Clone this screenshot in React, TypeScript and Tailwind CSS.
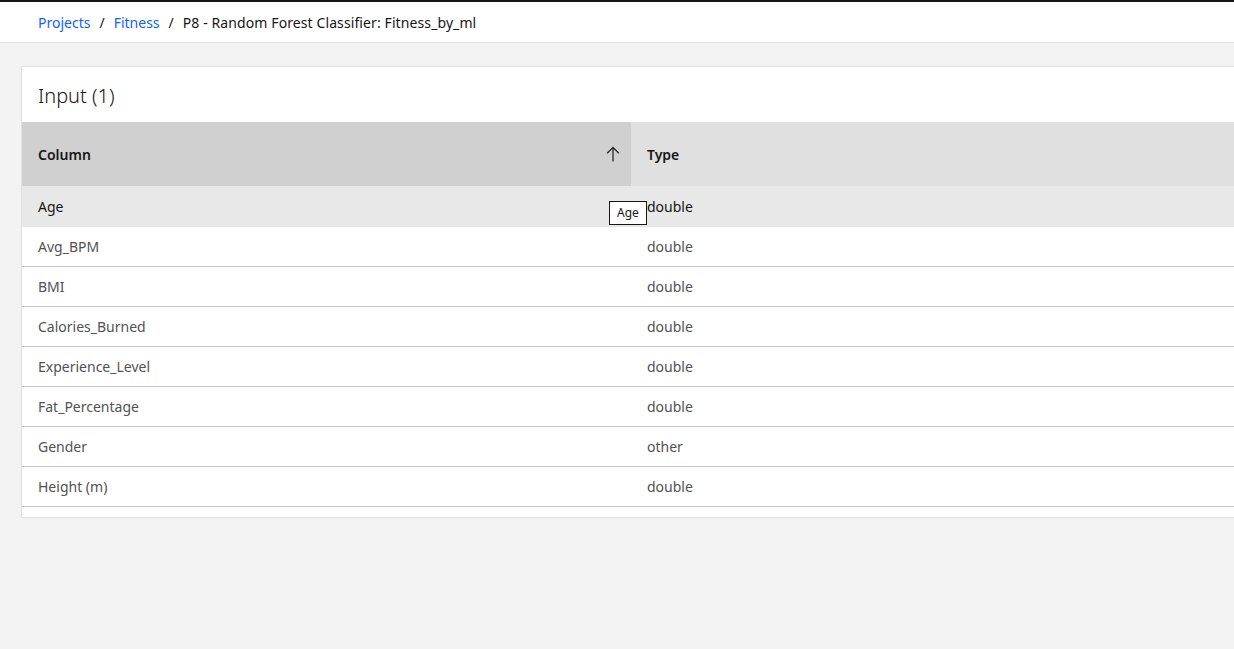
const rows: { name: string; type: string }[] = [
  { name: "Age", type: "double" },
  { name: "Avg_BPM", type: "double" },
  { name: "BMI", type: "double" },
  { name: "Calories_Burned", type: "double" },
  { name: "Experience_Level", type: "double" },
  { name: "Fat_Percentage", type: "double" },
  { name: "Gender", type: "other" },
  { name: "Height (m)", type: "double" },
];

export default function App() {
  return (
    <main
      className="h-[649px] w-[1234px] overflow-hidden bg-[#f3f3f3]"
      style={{ fontFamily: '"Noto Sans", "Open Sans", sans-serif' }}
    >
      {/* Top bar */}
      <div className="h-[2px] bg-[#161616]" />
      <header className="flex h-[41px] items-center border-b border-[#e0e0e0] bg-white px-[38px] text-[14px]">
        <a className="text-[#0f62fe]">Projects</a>
        <span className="mx-[9px] text-[#161616]">/</span>
        <a className="text-[#0f62fe]">Fitness</a>
        <span className="mx-[9px] text-[#161616]">/</span>
        <span className="tracking-[0.1px] text-[#161616]">P8 - Random Forest Classifier: Fitness_by_ml</span>
      </header>

      <div className="pl-[21px] pt-[23px]">
        <div className="w-[1300px] border border-[#e0e0e0] bg-white">
          <h2 className="flex h-[55px] items-center px-4 pt-[2px] text-[20px] font-light text-[#161616]">
            Input (1)
          </h2>
          <div className="h-[395px] overflow-hidden">
            <div className="flex h-16 text-[14px] font-semibold text-[#161616]">
              <div className="relative flex w-[609px] items-center bg-[#d0d0d0] px-4">
                Column
                <svg
                  viewBox="0 0 32 32"
                  className="absolute left-[581px] top-[22px] h-5 w-5 fill-[#262626]"
                >
                  <path d="M16 4L6 14l1.41 1.41L15 7.83V28h2V7.83l7.59 7.58L26 14 16 4z" />
                </svg>
              </div>
              <div className="flex flex-1 items-center bg-[#e0e0e0] px-4">Type</div>
            </div>
            {rows.map((r, i) => (
              <div
                key={r.name}
                className={
                  i === 0
                    ? "relative flex h-[41px] bg-[#e8e8e8] text-[14px] text-[#161616]"
                    : "flex h-10 border-b border-[#c6c6c6] text-[14px] text-[#525252]"
                }
              >
                <div className="flex w-[609px] items-center px-4">{r.name}</div>
                <div className="flex flex-1 items-center px-4">{r.type}</div>
                {i === 0 && (
                  <span className="absolute left-[587px] top-[15px] border border-[#161616] bg-white px-[7px] py-[3px] text-[12px] leading-[16px] text-[#161616]">
                    Age
                  </span>
                )}
              </div>
            ))}
          </div>
        </div>
      </div>
    </main>
  );
}
